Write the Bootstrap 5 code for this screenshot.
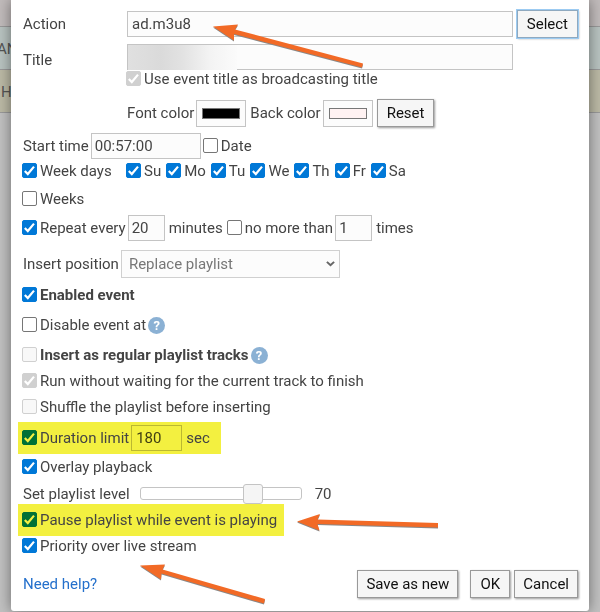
<!DOCTYPE html>
<html lang="en">
<head>
<meta charset="utf-8">
<meta name="viewport" content="width=device-width, initial-scale=1">
<title>Edit event</title>
<link href="https://cdn.jsdelivr.net/npm/bootstrap@5.3.0/dist/css/bootstrap.min.css" rel="stylesheet">
<style>
body{font-family:Roboto,"Liberation Sans",sans-serif;font-size:15px;line-height:18px;color:#444;background:#c1c1c1}
.schedule{z-index:0}
.slot{height:43px;padding-top:13px;border-bottom:1px solid #999;color:#555;line-height:18px}
.slot-first{height:27px;background:#c1bbbb}
.slot-a{background:#b8c3c0;text-indent:-3px}
.slot-b{background:#bbb9a5;text-indent:1px}
.dialog{margin:0 11px 1px;padding:10px 11px 13px;background:#fff;border-radius:0 0 3px 3px;box-shadow:0 0 14px rgba(0,0,0,.45);z-index:1}
.field{height:26px;border:1px solid #c4c4c4;background:#fcfcfc;color:#444;padding:0 4px;border-radius:0}
.field-inline{margin:0 4px 0 2px}
.field-num{width:37px}
.field-sec{width:51px}
.field-time{width:110px;margin:0 2px}
.field-time,.field-num{padding-left:3px}
.field-color{width:50px;height:27px;padding:6px 5px}
.field-color::-webkit-color-swatch-wrapper{padding:1px 0}
.field-color::-webkit-color-swatch{border:1px solid #777;border-radius:0}
.cap{width:105px;padding-left:1px}
.cap-low{padding-top:7px}
.pl{padding-left:1px}
.push-btn{height:28px;border:1px solid #999;border-radius:0;background:#f6f6f6;color:#111;padding:0 9px;line-height:18px;font-size:15px;box-shadow:1px 1px 2px rgba(0,0,0,.4)}
.push-btn:focus,.push-focus{border-color:#8fa9bf;box-shadow:0 0 0 1px #9ccbf2,1px 1px 2px rgba(0,0,0,.3)}
.push-foot{min-width:40px;padding:0 8px}
.tick{appearance:none;width:15px;height:15px;margin:0 3px 2px 0;border:1px solid #767676;border-radius:2px;background:#fff;flex:none}
.tick:checked{border-color:#0078d7;background:#0078d7 url("data:image/svg+xml,%3Csvg xmlns='http://www.w3.org/2000/svg' viewBox='0 0 13 13'%3E%3Cpath d='M1.8 7l3 3L11 2.6' fill='none' stroke='%23fff' stroke-width='2.2'/%3E%3C/svg%3E") center/13px}
.tick:disabled{border-color:#d0d0d0;background-color:#f8f8f8}
.tick:checked:disabled{background-color:#d0d0d0}
.title-row,.time-row{margin-top:6px}
.title-box{margin-right:65px}
.under{margin-left:104px}
.color-row{margin-top:11px}
.pos-row{margin-top:9px}
.footer-row{margin-top:14px}
.line{height:26px}
.line-sub{height:18px}
.line-week{height:24px}
.line-weeks{height:32px}
.line-enabled{height:34px}
.line-level{height:24px;padding-top:3px}
.line-last{height:20px}
.marked{margin-left:-4px;padding-left:4px;background:#f3f040;height:32px}
.marked .tick,.marked .field{mix-blend-mode:multiply}
.marked .field{background:transparent;padding-left:4px}
.marked-a{width:203px;margin-top:2px}
.marked-b{width:266px}
.days{width:86px}
.day{margin-right:5px}
.pick{width:219px;height:28px;margin-left:2px;border:1px solid #d0d0d0;border-radius:0;color:#777;padding:0 30px 0 7px;appearance:none;background:#fcfcfc url("data:image/svg+xml,%3Csvg xmlns='http://www.w3.org/2000/svg' viewBox='0 0 10 7'%3E%3Cpath d='M1 1l4 4 4-4' fill='none' stroke='%23666' stroke-width='2.2'/%3E%3C/svg%3E") right 4px center/9px no-repeat}
.pick:disabled{opacity:1}
.hint{width:17px;height:17px;margin-left:2px;background:#8bb1d4;color:#fff;font-size:13px;line-height:17px;font-weight:700}
.level{appearance:none;width:162px;height:13px;margin:0 13px 0 10px;border:1px solid #c4c4c4;border-radius:3px;background:#fff}
.level::-webkit-slider-thumb{appearance:none;width:20px;height:20px;border:1px solid #c4c4c4;border-radius:3px;background:#f5f5f5}
.smudge{left:1px;top:1px;width:109px;height:25px;background:linear-gradient(90deg,#e0e0e0,#dadada 30%,#e2e2e2 50%,#f3f3f3 75%,#fbfbfb)}
.help{color:#2470cc}
.arrows{z-index:2;filter:drop-shadow(0 1px 0 #888)}
</style>
</head>
<body class="position-relative">
<div class="schedule position-absolute top-0 start-0 w-100" aria-hidden="true">
<div class="slot slot-first"></div>
<div class="slot slot-a">AN</div>
<div class="slot slot-b">H</div>
</div>
<form class="dialog position-relative">
<div class="d-flex align-items-center">
<label class="cap" for="action">Action</label>
<input class="field flex-grow-1" id="action" value="ad.m3u8">
<button type="button" class="push-btn push-focus ms-1">Select</button>
</div>
<div class="d-flex title-row">
<label class="cap cap-low" for="title">Title</label>
<div class="title-box position-relative flex-grow-1 d-flex"><input class="field w-100" id="title"><span class="smudge position-absolute"></span></div>
</div>
<div class="line-sub under d-flex align-items-center"><input type="checkbox" class="tick" id="usetitle" checked disabled><label for="usetitle">Use event title as broadcasting title</label></div>
<div class="color-row under d-flex align-items-center">
<label class="pl" for="fc">Font color</label><input type="color" class="field field-color field-inline" id="fc" value="#000000">
<label for="bc">Back color</label><input type="color" class="field field-color field-inline" id="bc" value="#fff2f2">
<button type="button" class="push-btn">Reset</button>
</div>
<div class="time-row d-flex align-items-center"><label class="pl" for="start">Start time</label><input class="field field-time" id="start" value="00:57:00"><input type="checkbox" class="tick" id="date"><label for="date">Date</label></div>
<div class="line-week d-flex align-items-center">
<input type="checkbox" class="tick" id="wd" checked><label class="days" for="wd">Week days</label>
<input type="checkbox" class="tick" id="su" checked><label class="day" for="su">Su</label>
<input type="checkbox" class="tick" id="mo" checked><label class="day" for="mo">Mo</label>
<input type="checkbox" class="tick" id="tu" checked><label class="day" for="tu">Tu</label>
<input type="checkbox" class="tick" id="we" checked><label class="day" for="we">We</label>
<input type="checkbox" class="tick" id="th" checked><label class="day" for="th">Th</label>
<input type="checkbox" class="tick" id="fr" checked><label class="day" for="fr">Fr</label>
<input type="checkbox" class="tick" id="sa" checked><label for="sa">Sa</label>
</div>
<div class="line-weeks d-flex align-items-center"><input type="checkbox" class="tick" id="weeks"><label for="weeks">Weeks</label></div>
<div class="line d-flex align-items-center">
<input type="checkbox" class="tick" id="rep" checked><label for="rep">Repeat every</label><input class="field field-num field-inline" value="20" aria-label="Minutes"><span class="me-1">minutes</span>
<input type="checkbox" class="tick" id="nmt"><label for="nmt">no more than</label><input class="field field-num field-inline" value="1" aria-label="Times"><span>times</span>
</div>
<div class="pos-row d-flex align-items-center"><label class="pl" for="pos">Insert position</label><select class="pick" id="pos" disabled><option>Replace playlist</option></select></div>
<div class="line-enabled d-flex align-items-center fw-bold"><input type="checkbox" class="tick" id="en" checked><label for="en">Enabled event</label></div>
<div class="line d-flex align-items-center mb-1"><input type="checkbox" class="tick" id="dis"><label for="dis">Disable event at</label><span class="hint rounded-circle text-center">?</span></div>
<div class="line d-flex align-items-center"><input type="checkbox" class="tick" id="reg" disabled><label class="fw-bold" for="reg">Insert as regular playlist tracks</label><span class="hint rounded-circle text-center">?</span></div>
<div class="line d-flex align-items-center"><input type="checkbox" class="tick" id="run" checked disabled><label for="run">Run without waiting for the current track to finish</label></div>
<div class="line d-flex align-items-center"><input type="checkbox" class="tick" id="shuf" disabled><label for="shuf">Shuffle the playlist before inserting</label></div>
<div class="marked marked-a d-flex align-items-center"><input type="checkbox" class="tick" id="dur" checked><label for="dur">Duration limit</label><input class="field field-sec field-inline" value="180" aria-label="Seconds"><span>sec</span></div>
<div class="line d-flex align-items-center"><input type="checkbox" class="tick" id="ov" checked><label for="ov">Overlay playback</label></div>
<div class="line-level d-flex align-items-center"><label class="pl" for="lvl">Set playlist level</label><input type="range" class="level" id="lvl" min="0" max="100" value="73"><output for="lvl">70</output></div>
<div class="marked marked-b d-flex align-items-center"><input type="checkbox" class="tick" id="pause" checked><label for="pause">Pause playlist while event is playing</label></div>
<div class="line-last d-flex align-items-center"><input type="checkbox" class="tick" id="prio" checked><label for="prio">Priority over live stream</label></div>
<div class="footer-row d-flex align-items-center gap-1"><a class="help pl text-decoration-none me-auto" href="#">Need help?</a><button type="button" class="push-btn push-foot me-2">Save as new</button><button type="button" class="push-btn push-foot">OK</button><button type="button" class="push-btn push-foot">Cancel</button></div>
</form>
<svg class="arrows position-absolute top-0 start-0 pe-none" width="600" height="611" viewBox="0 0 600 611" aria-hidden="true">
<g fill="#f26a26">
<path d="M213 26.5L238 24.5L235 29.5L363 63.5L362 67.5L234 34L234 40.5Z"/>
<path d="M297 521.5L320 514L317.500 519.500L438 523L438 527.500L317.500 524L319.500 530.500Z"/>
<path d="M140 565.500L165 564.500L162.500 569.500L265 599L264 603.500L161.500 573.500L161 579.500Z"/>
</g>
</svg>
<script src="https://cdn.jsdelivr.net/npm/bootstrap@5.3.0/dist/js/bootstrap.bundle.min.js"></script>
</body>
</html>
